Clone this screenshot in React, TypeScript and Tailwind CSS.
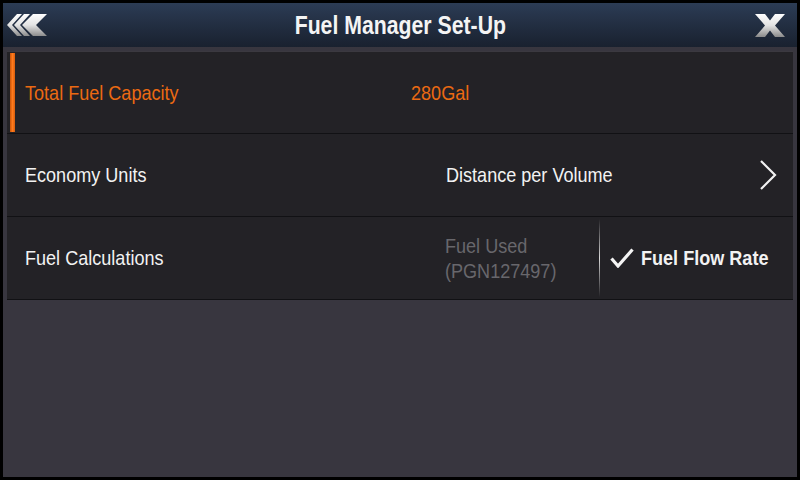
const font = { fontFamily: '"Liberation Sans Narrow", "Liberation Sans", Arial, sans-serif' };

const BackIcon = () => (
  <svg width="44" height="26" viewBox="6 12 44 26">
    <defs>
      <linearGradient id="metal" x1="0" y1="0" x2="0" y2="1">
        <stop offset="0" stopColor="#ffffff" />
        <stop offset="0.5" stopColor="#e4e4e4" />
        <stop offset="1" stopColor="#8c8c8c" />
      </linearGradient>
    </defs>
    <polygon points="7,25 17,14 22,14 12,25 22,36 17,36" fill="url(#metal)" />
    <polygon points="14,25 24,14 30,14 20,25 30,36 24,36" fill="url(#metal)" />
    <polygon points="22,25 33,14 47,14 36,25 47,36 33,36" fill="url(#metal)" />
  </svg>
);

const CloseIcon = () => (
  <svg width="32" height="26" viewBox="754 12 32 26">
    <defs>
      <linearGradient id="metalX" x1="0" y1="0" x2="0" y2="1">
        <stop offset="0" stopColor="#ffffff" />
        <stop offset="0.5" stopColor="#e2e2e2" />
        <stop offset="1" stopColor="#8a8a8a" />
      </linearGradient>
    </defs>
    <polygon
      points="755,14 765,14 770,20.5 775,14 785,14 775,25.5 785,37 775,37 770,30.5 765,37 755,37 765,25.5"
      fill="url(#metalX)"
    />
  </svg>
);

const Chevron = () => (
  <svg width="18" height="30" viewBox="0 0 18 30">
    <path d="M2 1 L16 15 L2 29" fill="none" stroke="#f2f2f2" strokeWidth="2.2" />
  </svg>
);

const Check = () => (
  <svg width="24" height="20" viewBox="0 0 24 20">
    <path d="M1.5 10.5 L8 18 L22.5 1.5" fill="none" stroke="#f4f4f4" strokeWidth="3.2" />
  </svg>
);

// the device font is a narrow face; squeeze Liberation Sans to the same width
const Narrow = ({ children }: { children: React.ReactNode }) => (
  <span className="inline-block whitespace-nowrap origin-left scale-x-[0.86]">{children}</span>
);

export default function App() {
  return (
    <div className="w-[800px] h-[480px] bg-black p-[3px] flex flex-col" style={font}>
      <header className="h-[44px] grid grid-cols-[1fr_auto_1fr] items-center bg-gradient-to-b from-[#2c3c55] to-[#19212f] px-[3px]">
        <div className="flex items-center">
          <BackIcon />
        </div>
        <h1 className="text-[25px] font-bold text-[#f4f4f4] leading-none whitespace-nowrap scale-x-[0.85]">
          Fuel Manager Set-Up
        </h1>
        <div className="flex justify-end items-center pr-[8px]">
          <CloseIcon />
        </div>
      </header>

      <main className="flex-1 bg-[#38363f] pt-[4px] px-[4px]">
        <div className="relative h-[83px] flex items-center bg-[#232226] border-t border-t-[#3b3940] border-b border-b-[#111114] pl-[18px] text-[21px] text-[#ec6a12]">
          <span className="absolute left-[3px] top-[1px] bottom-[1px] w-[5px] bg-gradient-to-r from-[#c85408] via-[#ff7a1c] to-[#d85e0c]" />
          <span className="w-[386px]">
            <Narrow>Total Fuel Capacity</Narrow>
          </span>
          <Narrow>280Gal</Narrow>
        </div>

        <div className="h-[83px] flex items-center bg-[#232226] border-b border-b-[#111114] pl-[18px] pr-[16px] text-[21px] text-[#f2f2f2]">
          <span className="w-[421px]">
            <Narrow>Economy Units</Narrow>
          </span>
          <span className="flex-1">
            <Narrow>Distance per Volume</Narrow>
          </span>
          <Chevron />
        </div>

        <div className="h-[83px] flex items-center bg-[#232226] border-b border-b-[#111114] pl-[18px] text-[21px] text-[#f2f2f2]">
          <span className="w-[420px]">
            <Narrow>Fuel Calculations</Narrow>
          </span>
          <div className="flex-1 leading-[25px] text-[#68676c]">
            <div>
              <Narrow>Fuel Used</Narrow>
            </div>
            <div>
              <Narrow>(PGN127497)</Narrow>
            </div>
          </div>
          <div className="w-px self-stretch my-[2px] bg-gradient-to-b from-transparent via-[#d8d8d8] to-transparent" />
          <div className="w-[193px] flex items-center gap-[7px] pl-[10px]">
            <Check />
            <span className="font-bold">
              <Narrow>Fuel Flow Rate</Narrow>
            </span>
          </div>
        </div>
      </main>
    </div>
  );
}
